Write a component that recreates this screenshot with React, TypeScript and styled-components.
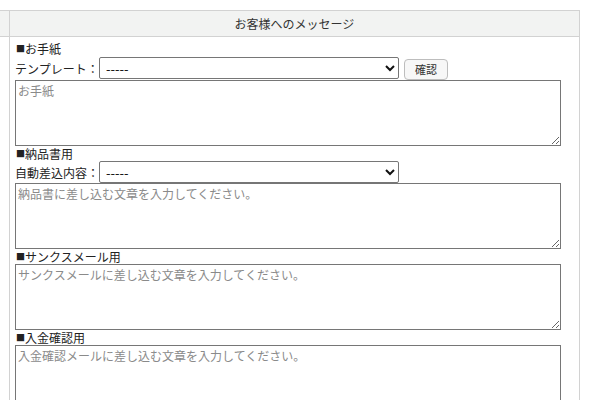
import React from "react";
import styled, { createGlobalStyle } from "styled-components";

const GlobalStyle = createGlobalStyle`
  body {
    margin: 0;
    background: #fff;
    font-family: "Noto Sans CJK JP", "Noto Sans", sans-serif;
    font-size: 12px;
    color: #222;
  }
`;

const sections = [
  { title: "お手紙", kind: "template", placeholder: "お手紙" },
  { title: "納品書用", kind: "auto", placeholder: "納品書に差し込む文章を入力してください。" },
  { title: "サンクスメール用", kind: "none", placeholder: "サンクスメールに差し込む文章を入力してください。" },
  { title: "入金確認用", kind: "none", placeholder: "入金確認メールに差し込む文章を入力してください。" },
];

const App: React.FC = () => {
  return (
    <>
      <GlobalStyle />
      <Table>
        <HeadSide />
        <HeadCell>お客様へのメッセージ</HeadCell>
        <Side />
        <Body>
          {sections.map((s) => (
            <Section key={s.title}>
              <Title>
                <Square>■</Square>
                {s.title}
              </Title>
              {s.kind === "template" && (
                <FieldRow>
                  <FieldLabel>テンプレート：</FieldLabel>
                  <Select defaultValue="">
                    <option value="">-----</option>
                  </Select>
                  <Button>確認</Button>
                </FieldRow>
              )}
              {s.kind === "auto" && (
                <FieldRow $short>
                  <FieldLabel>自動差込内容：</FieldLabel>
                  <Select defaultValue="">
                    <option value="">-----</option>
                  </Select>
                </FieldRow>
              )}
              <TextArea placeholder={s.placeholder} />
            </Section>
          ))}
        </Body>
      </Table>
    </>
  );
};

export default App;

const Table = styled.div`
  margin-top: 10px;
  width: 579px;
  display: grid;
  grid-template-columns: 10px 1fr;
  border-top: 1px solid #d2d2d2;
  border-right: 1px solid #d2d2d2;
`;

const HeadSide = styled.div`
  height: 25px;
  background: #f2f3f2;
  border-right: 1px solid #d2d2d2;
  border-bottom: 1px solid #d2d2d2;
`;

const HeadCell = styled.div`
  height: 25px;
  background: #f2f3f2;
  border-bottom: 1px solid #d2d2d2;
  display: flex;
  align-items: center;
  justify-content: center;
  color: #333;
  font-size: 12px;
`;

const Side = styled.div`
  border-right: 1px solid #d2d2d2;
`;

const Body = styled.div`
  padding: 4px 0 0 5px;
  display: flex;
  flex-direction: column;
`;

const Section = styled.div`
  display: flex;
  flex-direction: column;
`;

const Title = styled.div`
  height: 15px;
  line-height: 15px;
  font-size: 12px;
  color: #222;
  display: flex;
  align-items: center;
`;

const Square = styled.span`
  font-size: 9px;
  width: 9px;
  margin-left: 1px;
  color: #222;
`;

const FieldRow = styled.div<{ $short?: boolean }>`
  height: ${(p) => (p.$short ? "22px" : "24px")};
  display: flex;
  align-items: center;
`;

const FieldLabel = styled.span`
  width: 84px;
  font-size: 12px;
  white-space: nowrap;
`;

const Select = styled.select`
  width: 300px;
  height: 22px;
  box-sizing: border-box;
  border: 1px solid #767676;
  border-radius: 2px;
  background: #fff;
  font-family: inherit;
  font-size: 13px;
  color: #111;
  padding: 0 2px;
`;

const Button = styled.button`
  margin-left: 5px;
  margin-top: 2px;
  width: 44px;
  height: 21px;
  box-sizing: border-box;
  border: 1px solid #bdbdbd;
  border-radius: 4px;
  background: #f7f7f7;
  font-family: inherit;
  font-size: 11px;
  color: #333;
  padding: 0;
`;

const TextArea = styled.textarea`
  width: 546px;
  height: 66px;
  box-sizing: border-box;
  display: block;
  margin: 0;
  border: 1px solid #767676;
  border-radius: 0;
  padding: 2px;
  font-family: inherit;
  font-size: 12px;
  line-height: 15px;
  &::placeholder {
    color: #8a8a8a;
  }
`;
